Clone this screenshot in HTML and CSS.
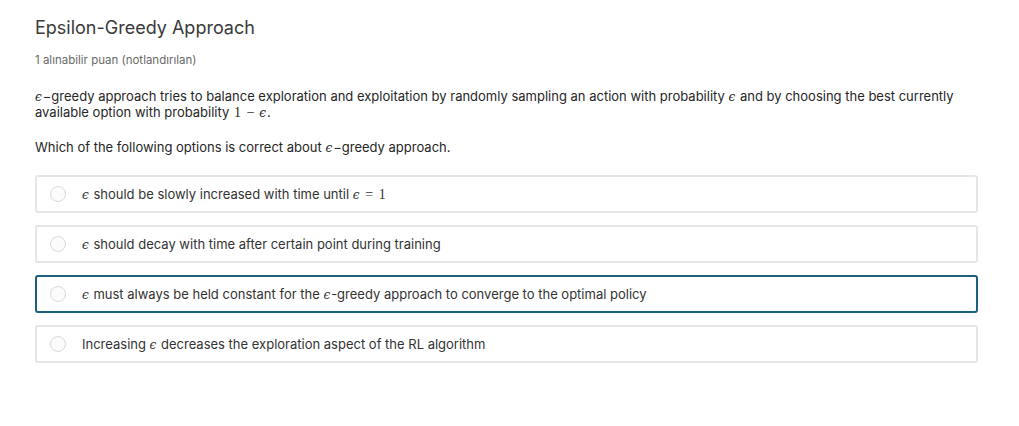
FILE: index.html
```html
<!DOCTYPE html>
<html>
<head>
<meta charset="utf-8">
<link rel="stylesheet" href="styles.css">
</head>
<body>
<div class="page">
  <h1 class="title">Epsilon-Greedy Approach</h1>
  <div class="points">1 alınabilir puan (notlandırılan)</div>
  <p class="para"><span class="m">ϵ</span>−greedy approach tries to balance exploration and exploitation by randomly sampling an action with probability <span class="m">ϵ</span> <span>and by choosing the best currently</span> <span>available option with probability</span> <span class="n">1</span> <span class="op">−</span> <span class="m">ϵ</span>.</p>
  <p class="para q">Which of the following options is correct about <span class="m">ϵ</span>−greedy approach.</p>
  <div class="options">
    <label class="opt"><span class="radio"></span><span class="txt"><span class="m">ϵ</span> should be slowly increased with time until <span class="m">ϵ</span> <span class="op">=</span> <span class="n">1</span></span></label>
    <label class="opt"><span class="radio"></span><span class="txt"><span class="m">ϵ</span> should decay with time after certain point during training</span></label>
    <label class="opt sel"><span class="radio"></span><span class="txt"><span class="m">ϵ</span> must always be held constant for the <span class="m">ϵ</span>-greedy approach to converge to the optimal policy</span></label>
    <label class="opt"><span class="radio"></span><span class="txt">Increasing <span class="m">ϵ</span> decreases the exploration aspect of the RL algorithm</span></label>
  </div>
</div>
</body>
</html>
```
FILE: styles.css
```css
html, body { margin: 0; padding: 0; background: #fff; }
body { font-family: Inter, "Noto Sans", sans-serif; color: #1f1f1f; }
.page { width: 943px; padding: 16px 0 0 35px; }
.title { margin: 0; font-size: 18px; font-weight: 400; line-height: 24px; color: #3a3a3a; }
.points { margin-top: 13px; font-size: 11.5px; line-height: 14px; color: #6a6a6a; }
.para { margin: 21px 0 0; font-size: 13px; line-height: 16px; color: #262626; }
.para.q { margin-top: 19px; }
.m { font-family: "DejaVu Serif", "Liberation Serif", serif; font-style: italic; font-size: 12px; line-height: 1; margin-right: 1px; }
.n, .op { font-family: "Liberation Serif", serif; font-size: 14px; line-height: 1; margin: 0 1px; }
.options { margin-top: 20px; display: flex; flex-direction: column; gap: 12px; }
.opt { display: flex; align-items: center; height: 34px; border: 2px solid #e6e6e6; border-radius: 3px; padding-left: 13px; box-sizing: content-box; }
.opt.sel { border-color: #1e5f7e; }
.radio { width: 16px; height: 16px; border: 1px solid #dadada; border-radius: 50%; box-sizing: border-box; background: #fbfbfb; flex: none; }
.txt { margin-left: 16px; font-size: 13px; color: #333; }
```
